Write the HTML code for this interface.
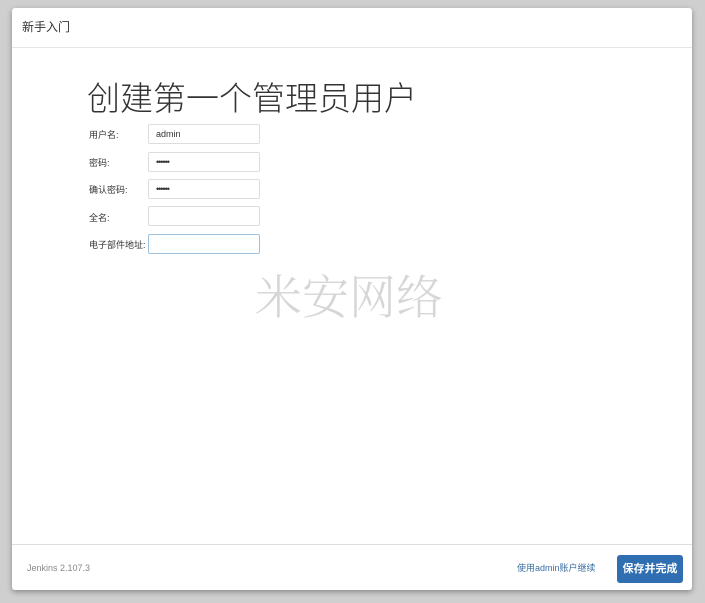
<!DOCTYPE html>
<html><head><meta charset="utf-8">
<style>
*{box-sizing:border-box;margin:0;padding:0}
html,body{width:705px;height:603px;overflow:hidden}
body{background:#cfcfcf;font-family:"Liberation Sans","Noto Sans CJK SC",sans-serif;position:relative}
.panel{position:absolute;left:12px;top:8px;width:680px;height:582px;background:#fff;border-radius:3px;box-shadow:0 2px 6px rgba(0,0,0,.35)}
.hdr{height:40px;border-bottom:1px solid #e5e5e5;padding:10px 10px;font-size:12px;color:#333}
.h1{position:absolute;left:75px;top:64px;font-size:33px;color:#333;font-weight:300;letter-spacing:0}
.row{position:absolute;left:77px;font-size:9px;color:#333}
.inp{position:absolute;left:136px;width:112px;height:20px;border:1px solid #ddd;border-radius:2px;font-size:9px;padding:4px 7px;color:#333}
.wm{position:absolute;left:243px;top:253px;font-size:47px;color:#d6d6d6;font-family:"Noto Serif CJK SC",serif;font-weight:300}
.ftr{position:absolute;left:0;top:536px;width:680px;border-top:1px solid #ddd}
.ver{position:absolute;left:15px;top:555px;font-size:9px;color:#888}
.lnk{position:absolute;left:505px;top:553px;font-size:9px;color:#3a6ea5}
.btn{position:absolute;left:605px;top:547px;width:66px;height:28px;background:#2f6eb0;border-radius:3px;color:#fff;font-size:11px;font-weight:bold;text-align:center;line-height:28px}
</style></head><body>
<div class="panel">
<div class="hdr">新手入门</div>
<div class="h1">创建第一个管理员用户</div>
<div class="row" style="top:120px">用户名:</div><div class="inp" style="top:116px">admin</div>
<div class="row" style="top:148px">密码:</div><div class="inp" style="top:144px;letter-spacing:-1px">••••••</div>
<div class="row" style="top:175px">确认密码:</div><div class="inp" style="top:171px;letter-spacing:-1px">••••••</div>
<div class="row" style="top:203px">全名:</div><div class="inp" style="top:198px"></div>
<div class="row" style="top:230px">电子部件地址:</div><div class="inp" style="top:226px;border-color:#9ec2de"></div>
<div class="wm">米安网络</div>
<div class="ftr"></div>
<div class="ver">Jenkins 2.107.3</div>
<div class="lnk">使用admin账户继续</div>
<div class="btn">保存并完成</div>
</div>
</body></html>
